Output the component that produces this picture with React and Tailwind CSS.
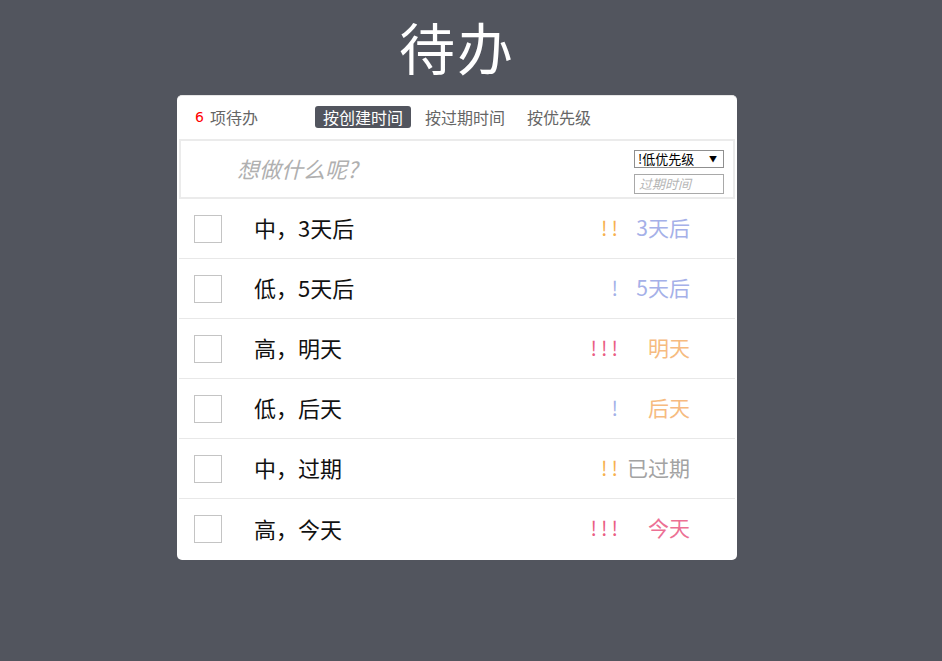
import React from "react";

const cjk = { fontFamily: '"Noto Sans CJK SC", "Noto Sans", sans-serif' };

const items = [
  { text: "中，3天后", pri: "!!", priColor: "text-[#f7b14e]", date: "3天后", dateColor: "text-[#a5b0e8]" },
  { text: "低，5天后", pri: "!", priColor: "text-[#a3b1e8]", date: "5天后", dateColor: "text-[#a5b0e8]" },
  { text: "高，明天", pri: "!!!", priColor: "text-[#ea5c84]", date: "明天", dateColor: "text-[#f6bb80]" },
  { text: "低，后天", pri: "!", priColor: "text-[#a3b1e8]", date: "后天", dateColor: "text-[#f6bb80]" },
  { text: "中，过期", pri: "!!", priColor: "text-[#f7b14e]", date: "已过期", dateColor: "text-[#a3a3a3]" },
  { text: "高，今天", pri: "!!!", priColor: "text-[#ea5c84]", date: "今天", dateColor: "text-[#ec7094]" },
];

export default function App() {
  return (
    <div className="min-h-screen bg-[#52555e] flex flex-col items-center pr-[28px]" style={cjk}>
      <div className="h-[95px] flex items-center justify-center">
        <h1 className="text-[56px] leading-none text-white font-normal tracking-[2px] pb-[4px]">待办</h1>
      </div>
      <div className="w-[560px] bg-white rounded-[5px] border-t border-[#e6e6e6] px-[2px] pb-[1px]">
        <div className="h-[43px] flex items-center pl-[16px] text-[16px] pb-[1px]">
          <div className="w-[120px] flex items-center">
            <span className="text-[#ff0000] mr-[6px]" style={{ fontFamily: '"DejaVu Sans", sans-serif', fontSize: 14 }}>6</span>
            <span className="text-[#666]">项待办</span>
          </div>
          <div className="flex items-center gap-[6px]">
            <button className="h-[22px] px-[8px] rounded-[3px] bg-[#52555e] text-white leading-[22px]">按创建时间</button>
            <button className="h-[22px] px-[8px] rounded-[3px] text-[#666] leading-[22px]">按过期时间</button>
            <button className="h-[22px] px-[8px] rounded-[3px] text-[#666] leading-[22px]">按优先级</button>
          </div>
        </div>
        <div className="h-[60px] border-2 border-[#ebebeb] flex items-center pl-[56px] pr-[9px]">
          <div className="flex-1 text-[22px] italic text-[#b0b0b0] pb-[2px]">想做什么呢?</div>
          <div className="flex flex-col gap-[6px] w-[90px] pt-[5px]">
            <div className="h-[18px] border border-[#8f8f8f] flex items-center justify-between pl-[3px] pr-[6px] text-[13px] text-black leading-none">
              <span>!低优先级</span>
              <span className="text-[8px]">▼</span>
            </div>
            <div className="h-[20px] border border-[#a9a9a9] flex items-center pl-[4px] text-[13px] italic text-[#b5b5b5] leading-none">过期时间</div>
          </div>
        </div>
        {items.map((it, i) => (
          <div
            key={i}
            className={`h-[60px] flex items-center pl-[15px] pr-[45px] ${i < items.length - 1 ? "border-b border-[#e8e8e8]" : ""}`}
          >
            <div className="w-[28px] h-[28px] border border-[#c4c4c4] shrink-0" />
            <div className="ml-[32px] flex-1 text-[22px] text-[#111] pb-[2px]">{it.text}</div>
            <div className={`text-[20px] tracking-[4px] mr-[-2px] pb-[2px] ${it.priColor}`}>{it.pri}</div>
            <div className={`w-[70px] text-right text-[21px] pb-[2px] ${it.dateColor}`}>{it.date}</div>
          </div>
        ))}
      </div>
    </div>
  );
}
